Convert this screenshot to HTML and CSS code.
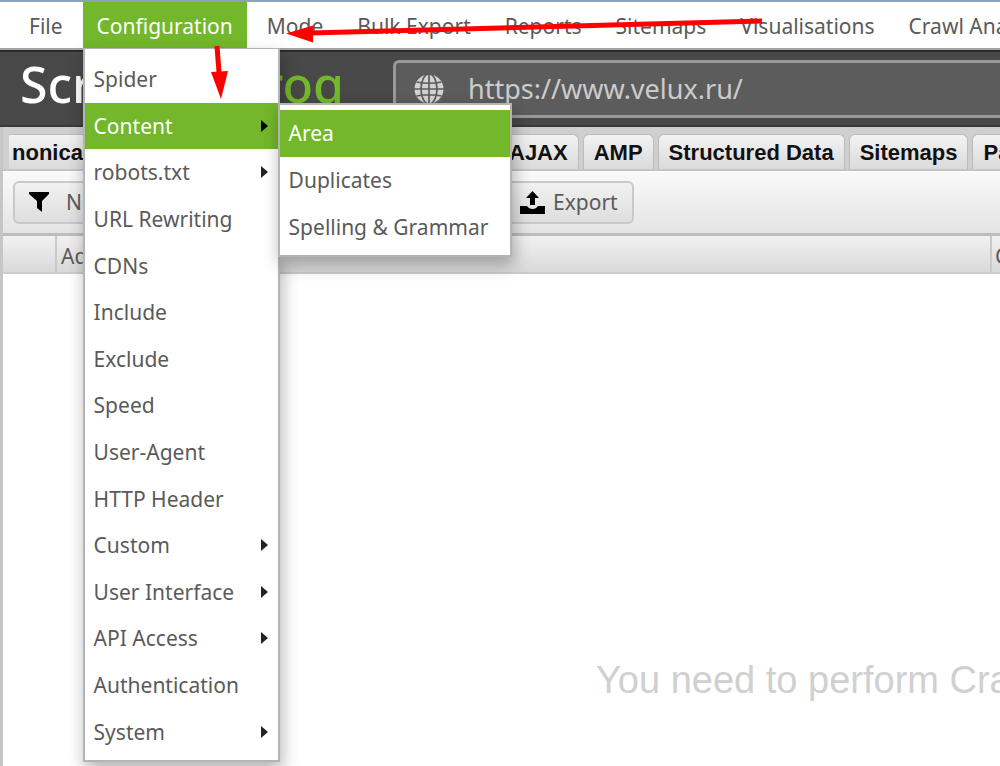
FILE: index.html
```html
<!DOCTYPE html>
<html lang="en">
<head>
<meta charset="utf-8">
<title>Screaming Frog SEO Spider</title>
<link rel="stylesheet" href="styles.css">
</head>
<body>
<div class="app">
  <nav class="menubar">
    <button class="menubar-item">File</button>
    <div class="menu-anchor">
      <button class="menubar-item is-open">Configuration</button>
      <div class="menu config-menu">
        <button class="menu-item">Spider</button>
        <div class="submenu-anchor">
          <button class="menu-item is-active has-sub">Content</button>
          <div class="menu submenu">
            <button class="menu-item is-active">Area</button>
            <button class="menu-item">Duplicates</button>
            <button class="menu-item">Spelling &amp; Grammar</button>
          </div>
        </div>
        <button class="menu-item has-sub">robots.txt</button>
        <button class="menu-item">URL Rewriting</button>
        <button class="menu-item">CDNs</button>
        <button class="menu-item">Include</button>
        <button class="menu-item">Exclude</button>
        <button class="menu-item">Speed</button>
        <button class="menu-item">User-Agent</button>
        <button class="menu-item">HTTP Header</button>
        <button class="menu-item has-sub">Custom</button>
        <button class="menu-item has-sub">User Interface</button>
        <button class="menu-item has-sub">API Access</button>
        <button class="menu-item">Authentication</button>
        <button class="menu-item has-sub">System</button>
      </div>
    </div>
    <button class="menubar-item">Mode</button>
    <button class="menubar-item">Bulk Export</button>
    <button class="menubar-item">Reports</button>
    <button class="menubar-item">Sitemaps</button>
    <button class="menubar-item">Visualisations</button>
    <button class="menubar-item">Crawl Analysis</button>
  </nav>

  <header class="brandbar">
    <div class="logo"><span>Scr</span><span class="logo-green">Frog</span></div>
    <label class="urlbox">
      <svg class="globe" viewBox="0 0 30 30" aria-hidden="true">
        <circle cx="15" cy="15" r="14.5" fill="#d2d2d2"/>
        <g fill="none" stroke="#5c5c5c" stroke-width="1.7">
          <path d="M15 0V30M0 15H30M2.500 8Q15 10.500 27.500 8M2.500 22Q15 19.500 27.500 22"/>
          <ellipse cx="15" cy="15" rx="8" ry="15"/>
        </g>
      </svg>
      <input class="url" type="text" value="https://www.velux.ru/" aria-label="URL to crawl">
    </label>
  </header>

  <main class="panel">
    <div class="tabs">
      <button class="tab tab-first">nonicals</button>
      <button class="tab">AJAX</button>
      <button class="tab">AMP</button>
      <button class="tab">Structured Data</button>
      <button class="tab">Sitemaps</button>
      <button class="tab">PageSpeed</button>
    </div>
    <div class="toolbar">
      <button class="tool filter">
        <svg class="funnel" viewBox="0 0 20 20" aria-hidden="true"><path d="M0 0H20V2L13 9V20L8 16V9L0 2Z"/></svg>
        No filter
      </button>
      <button class="tool">
        <svg class="upload" viewBox="0 0 25 23" aria-hidden="true"><path d="M12.500 0L19 7H15V14H10V7H6ZM0 15H7Q9 18 12.500 18T18 15H25V23H0Z"/></svg>
        Export
      </button>
    </div>
    <table class="grid">
      <thead><tr><th class="col-row" aria-label="Row"></th><th>Address</th><th class="col-content">Content</th></tr></thead>
    </table>
    <p class="notice">You need to perform Crawl Analysis</p>
  </main>

  <svg class="arrows" viewBox="0 0 1000 120" width="1000" height="120" aria-hidden="true">
    <path d="M217 46L219 72" stroke="#f00" stroke-width="5"/>
    <path d="M211 72L228 71L221 99Z" fill="#f00"/>
    <path d="M310 33L762 21" stroke="#f00" stroke-width="5"/>
    <path d="M286 33.500L313 25.500V42.500Z" fill="#f00"/>
  </svg>
</div>
</body>
</html>
```
FILE: styles.css
```css
* { box-sizing: border-box; }

body {
  margin: 0;
  background: #fff;
  color: #5a5a5a;
  font: 21px/30px "Noto Sans", "Open Sans", sans-serif;
}

button {
  margin: 0;
  border: 0;
  padding: 0;
  background: none;
  color: inherit;
  font: inherit;
  white-space: nowrap;
}

.app {
  position: relative;
  display: flex;
  flex-direction: column;
  min-height: 100vh;
  overflow: hidden;
}

/* Menu bar */
.menubar {
  display: flex;
  gap: 6px;
  border-top: 2px solid #8aa3ba;
  border-bottom: 2px solid #a5a5a5;
  padding-left: 15px;
  background: #fff;
}
.menubar-item {
  flex: none;
  padding: 9px 14px 7px;
}
.menubar-item.is-open {
  background: #73b72b;
  color: #fff;
}
.menu-anchor,
.submenu-anchor { position: relative; }
.submenu-anchor { display: flex; }

/* Drop-down menus */
.menu {
  position: absolute;
  z-index: 2;
  display: flex;
  flex-direction: column;
  border: 2px solid #b4b4b4;
  background: #fff;
  box-shadow: 2px 8px 16px rgba(0, 0, 0, 0.3);
}
.menu > * { flex: 1; }
.config-menu {
  top: 100%;
  left: 0;
  width: 197px;
  min-height: 714px;
  padding: 7px 0 5px;
  border-top-width: 1px;
}
.submenu {
  top: 0;
  left: 100%;
  width: 234px;
  padding: 5px 0 4px;
}
.submenu .menu-item { min-height: 47px; }
.menu-item {
  display: flex;
  align-items: center;
  justify-content: space-between;
  width: 100%;
  padding: 0 10px 0 9px;
  text-align: left;
}
.menu-item.is-active {
  background: #73b72b;
  color: #fff;
}
.has-sub::after {
  content: "";
  border: 6px solid transparent;
  border-left: 7px solid #222;
  border-right: 0;
}
.has-sub.is-active::after { border-left-color: #000; }

/* Brand and address */
.brandbar {
  display: flex;
  height: 77px;
  border-top: 2px solid #2c2c2c;
  border-bottom: 2px solid #383838;
  padding: 8px 0 7px 20px;
  background: #484848;
}
.logo {
  display: flex;
  flex: none;
  justify-content: space-between;
  width: 324px;
  color: #fff;
  font-size: 50px;
  font-weight: 500;
  line-height: 48px;
}
.logo-green { color: #73b72b; }
.urlbox {
  display: flex;
  flex: 1;
  align-items: center;
  gap: 24px;
  margin-left: 49px;
  border: 3px solid #999;
  border-right: 0;
  border-radius: 6px 0 0 6px;
  padding-left: 18px;
  background: #5c5c5c;
}
.globe { width: 30px; height: 30px; flex: none; }
.url {
  flex: 1;
  min-width: 0;
  border: 0;
  padding: 0;
  background: none;
  color: #ccc;
  font: 27px/36px "Noto Sans", "Open Sans", sans-serif;
}

/* Results panel */
.panel {
  flex: 1;
  border-left: 3px solid #c6c6c6;
}
.tabs {
  display: flex;
  gap: 4px;
  border-bottom: 2px solid #c4c4c4;
  padding: 7px 0 0 6px;
  background: #cfcfcf;
}
.tab {
  flex: none;
  border: 1px solid #bbb;
  border-bottom: 0;
  border-radius: 6px 6px 0 0;
  padding: 3px 10px 1px;
  background: linear-gradient(#f3f3f3, #dadada);
  color: #111;
  font: bold 22px/30px "Liberation Sans", Arial, sans-serif;
}
.tab-first {
  width: 485px;
  border-left: 0;
  border-radius: 0;
  padding-left: 3px;
  text-align: left;
}
.toolbar {
  display: flex;
  gap: 8px;
  border-bottom: 3px solid #bdbdbd;
  padding: 10px 10px 9px;
  background: linear-gradient(#fafafa, #e4e4e4);
}
.tool {
  display: flex;
  align-items: center;
  gap: 8px;
  border: 2px solid #c9c9c9;
  border-radius: 6px;
  padding: 4px 14px 5px;
  background: linear-gradient(#f1f1f1, #dedede);
}
.filter {
  gap: 17px;
  width: 483px;
}
.funnel { width: 20px; height: 20px; }
.upload { width: 25px; height: 23px; }

.grid {
  width: 100%;
  border-collapse: collapse;
  table-layout: fixed;
  overflow: hidden;
}
.grid th {
  height: 37px;
  border-bottom: 2px solid #ccc;
  border-left: 2px solid #c9c9c9;
  padding: 4px 4px 0;
  overflow: hidden;
  background: linear-gradient(#f1f1f1, #d9d9d9);
  font-weight: 400;
  line-height: 30px;
  text-align: left;
  white-space: nowrap;
}
.grid .col-row { width: 53px; border-left: 0; }
.grid .col-content { width: 9px; padding: 4px 0 0 3px; }
.notice {
  margin: 384px 0 0 593px;
  color: #d0d0d0;
  font: 38px/44px "Liberation Sans", Arial, sans-serif;
  white-space: nowrap;
}

/* Annotation arrows drawn over the window */
.arrows {
  position: absolute;
  z-index: 3;
  top: 0;
  left: 0;
  pointer-events: none;
}
```
